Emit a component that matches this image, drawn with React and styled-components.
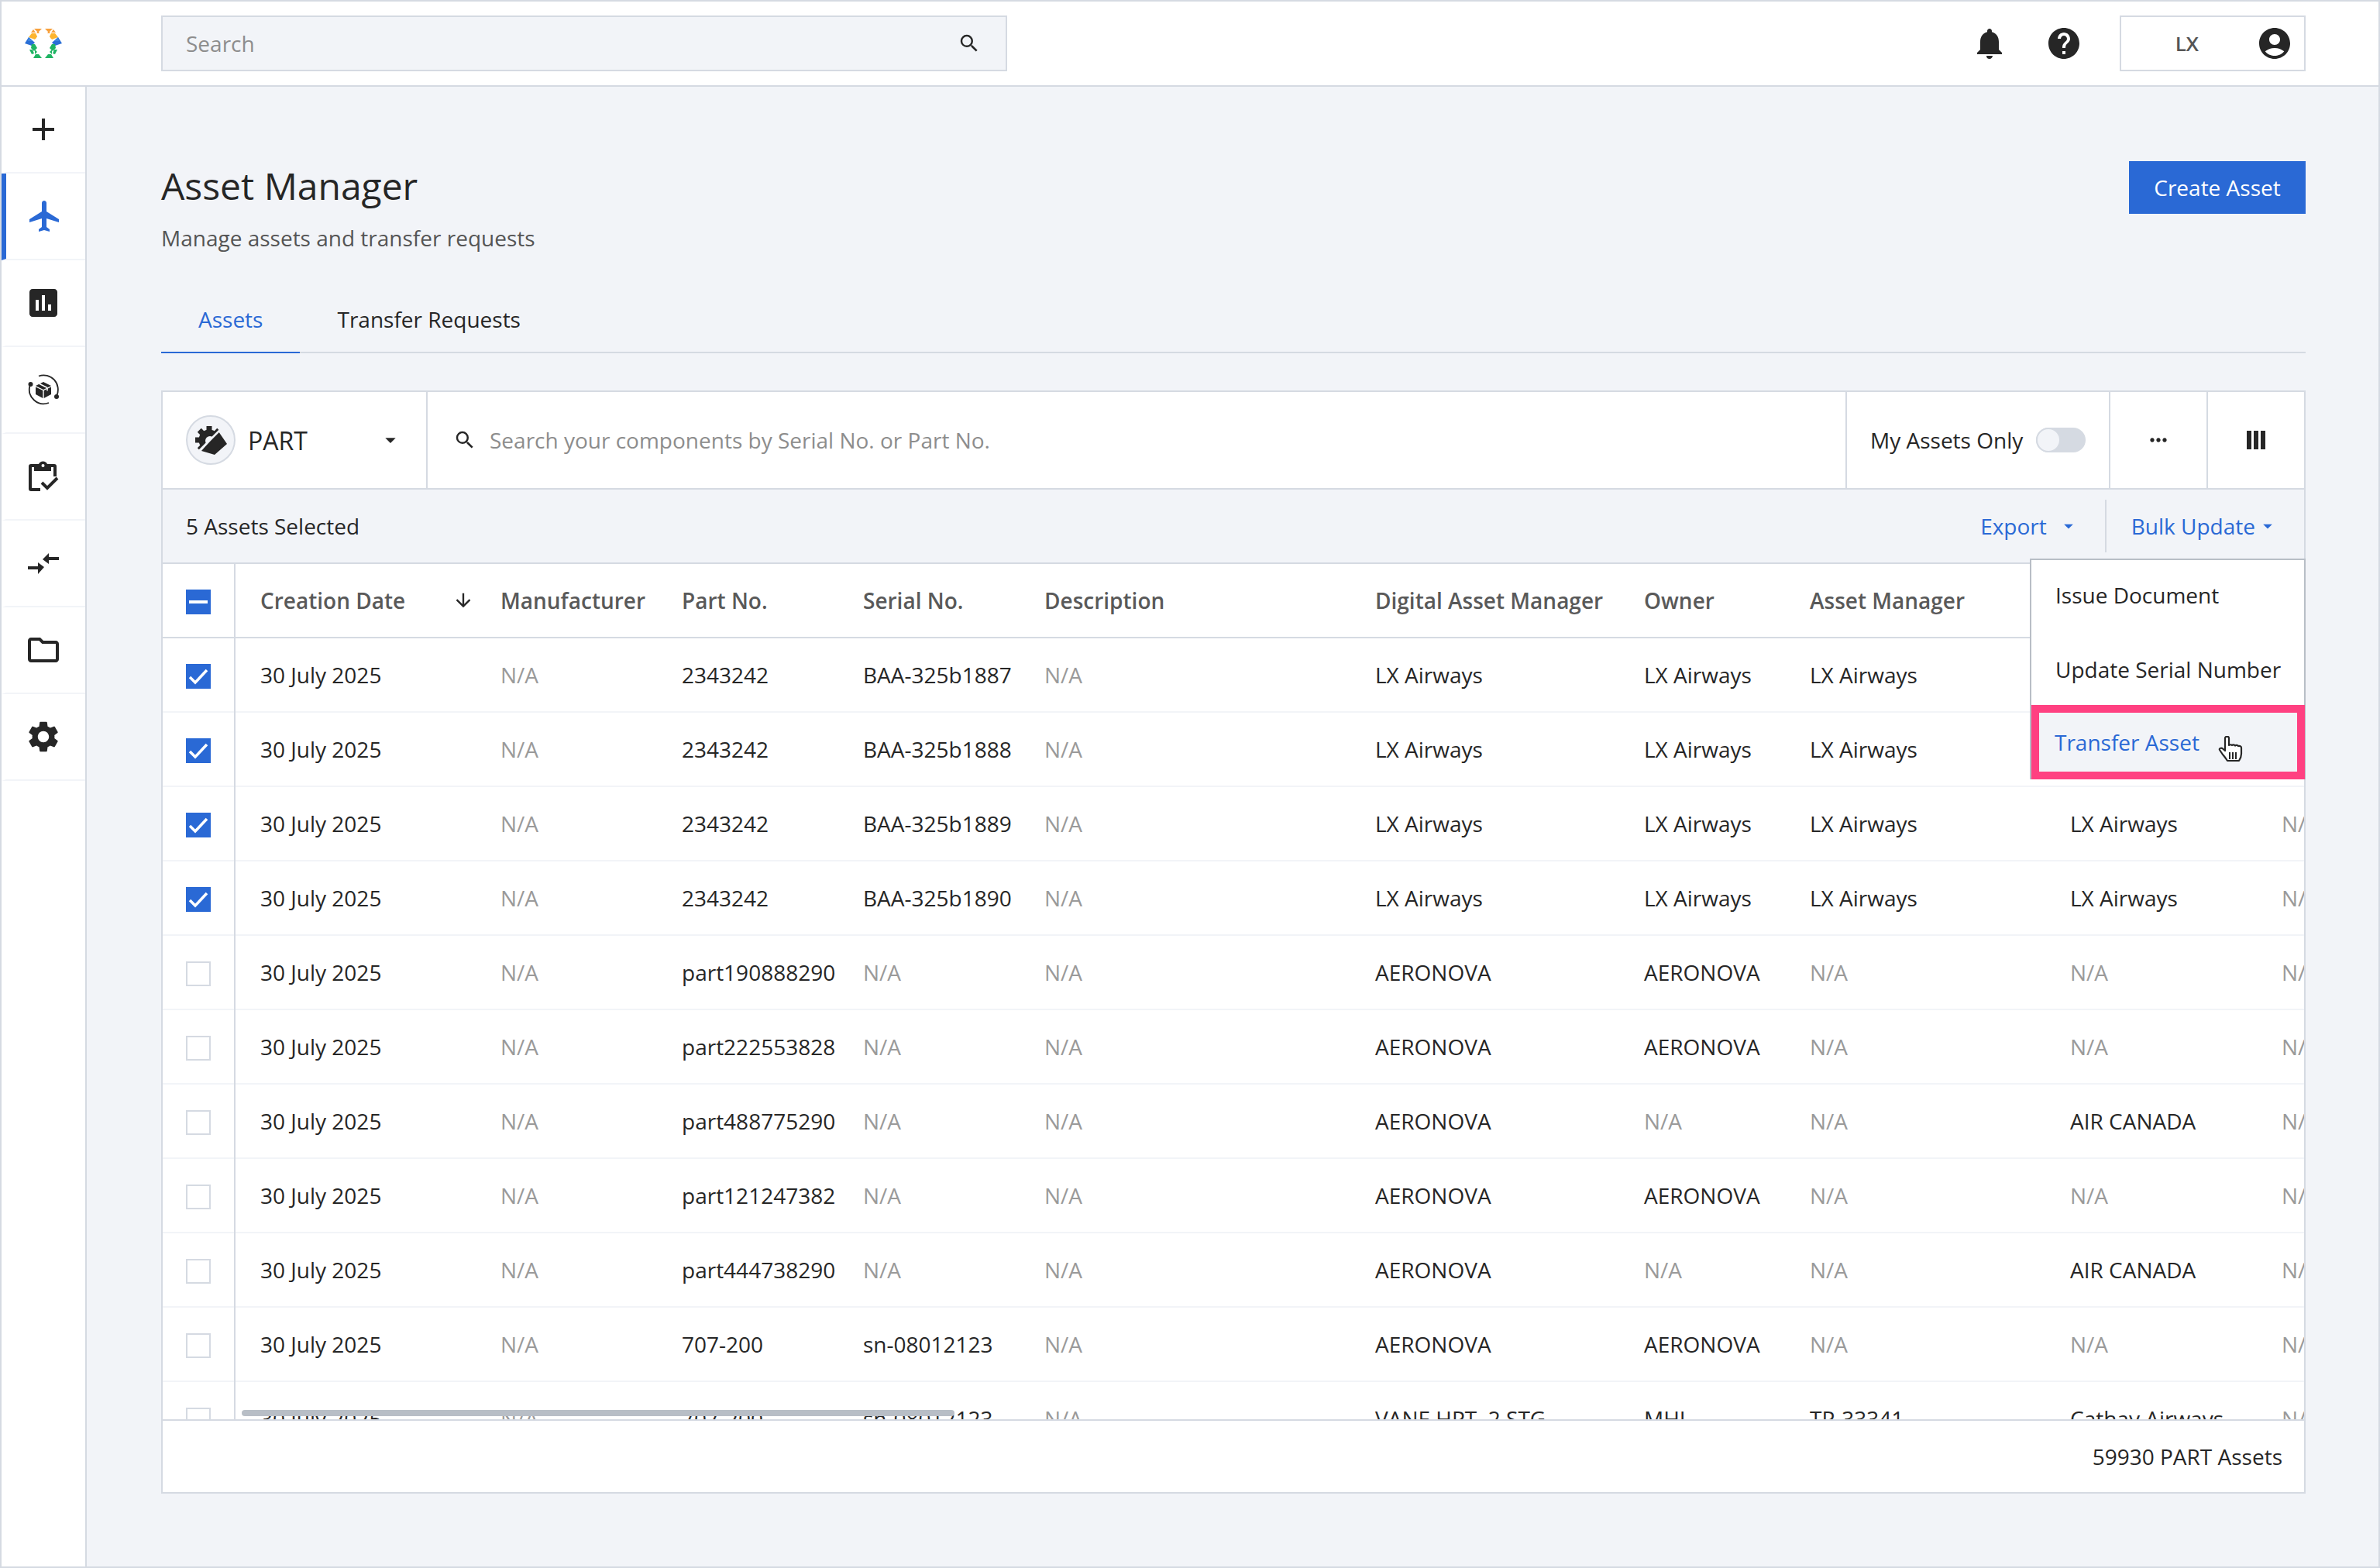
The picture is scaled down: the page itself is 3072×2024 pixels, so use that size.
import React from "react";
import styled, { createGlobalStyle } from "styled-components";
import {
  MdAdd,
  MdFlight,
  MdAssessment,
  MdSettings,
  MdNotifications,
  MdHelp,
  MdAccountCircle,
  MdSearch,
  MdMoreHoriz,
  MdArrowDropDown,
  MdArrowDownward,
  MdOutlineFolder,
} from "react-icons/md";

const BLUE = "#2a69d5";
const LINE = "#d5dae2";
const SOFT = "#f2f4f8";
const INK = "#262626";

const GlobalStyle = createGlobalStyle`
  html, body { margin: 0; padding: 0; background: ${SOFT}; }
  * { box-sizing: border-box; }
  body { font-family: "Open Sans", "Noto Sans", sans-serif; font-size: 28px; color: ${INK}; }
`;

const Page = styled.div`
  width: 3072px;
  height: 2024px;
  display: flex;
  flex-direction: column;
  border: 2px solid ${LINE};
  overflow: hidden;
  background: ${SOFT};
`;

const TopBar = styled.header`
  height: 110px;
  flex: none;
  display: flex;
  align-items: center;
  background: #fff;
  border-bottom: 2px solid ${LINE};
  padding: 0 94px 0 30px;
`;

const LogoBox = styled.div`
  width: 176px;
  flex: none;
  display: flex;
  align-items: center;
`;

const TopSearch = styled.div`
  width: 1092px;
  height: 72px;
  display: flex;
  align-items: center;
  justify-content: space-between;
  padding: 0 32px 0 30px;
  background: ${SOFT};
  border: 2px solid ${LINE};
  color: #8d8d8d;
  svg { color: ${INK}; }
`;

const TopActions = styled.div`
  margin-left: auto;
  display: flex;
  align-items: center;
`;

const RoundIcon = styled.span`
  display: flex;
  color: ${INK};
  margin-right: ${(p) => p.$gap}px;
`;

const UserBox = styled.div`
  width: 240px;
  height: 72px;
  display: flex;
  align-items: center;
  justify-content: flex-end;
  gap: 74px;
  padding-right: 14px;
  border: 2px solid ${LINE};
  font-weight: 600;
  font-size: 26px;
  color: #555;
`;

const Body = styled.div`
  flex: 1;
  display: flex;
  min-height: 0;
`;

const SideNav = styled.nav`
  width: 110px;
  flex: none;
  background: #fff;
  border-right: 2px solid ${LINE};
`;

const NavItem = styled.div`
  height: 112px;
  display: flex;
  align-items: center;
  justify-content: center;
  background: #fff;
  border-bottom: 2px solid ${SOFT};
  border-left: 6px solid ${(p) => (p.$active ? BLUE : "transparent")};
  padding-right: ${(p) => (p.$active ? 2 : 6)}px;
  color: ${(p) => (p.$active ? BLUE : INK)};
`;

const Main = styled.main`
  flex: 1;
  min-width: 0;
  padding: 96px 94px 0 96px;
  display: flex;
  flex-direction: column;
`;

const TitleRow = styled.div`
  display: flex;
  justify-content: space-between;
  align-items: flex-start;
  height: 110px;
`;

const Title = styled.h1`
  margin: 0;
  font-size: 48px;
  font-weight: 400;
  line-height: 64px;
  color: ${INK};
`;

const Subtitle = styled.p`
  margin: 16px 0 0;
  line-height: 38px;
  color: #555;
`;

const CreateButton = styled.button`
  width: 228px;
  height: 68px;
  border: 0;
  background: ${BLUE};
  color: #fff;
  font: inherit;
`;

const Tabs = styled.div`
  display: flex;
  margin-top: 64px;
  height: 74px;
  border-bottom: 2px solid ${LINE};
`;

const Tab = styled.div`
  padding: 0 48px 13px;
  height: 74px;
  display: flex;
  align-items: center;
  color: ${(p) => (p.$active ? BLUE : INK)};
  border-bottom: 2px solid ${(p) => (p.$active ? BLUE : "transparent")};
`;

const Panel = styled.section`
  position: relative;
  margin-top: 48px;
  height: 1424px;
  display: flex;
  flex-direction: column;
  background: #fff;
  border: 2px solid ${LINE};
`;

const Toolbar = styled.div`
  height: 126px;
  flex: none;
  display: flex;
  border-bottom: 2px solid ${LINE};
`;

const TypePicker = styled.div`
  width: 342px;
  flex: none;
  display: flex;
  align-items: center;
  padding: 0 30px 0 30px;
  border-right: 2px solid ${LINE};
  font-size: 32px;
`;

const TypeBadge = styled.span`
  width: 64px;
  height: 64px;
  flex: none;
  display: flex;
  align-items: center;
  justify-content: center;
  margin-right: 16px;
  border-radius: 50%;
  background: ${SOFT};
  border: 2px solid ${LINE};
`;

const Caret = styled(MdArrowDropDown)`
  margin-left: ${(p) => p.$left || "auto"};
  color: ${(p) => p.$tint || INK};
`;

const AssetSearch = styled.div`
  flex: 1;
  display: flex;
  align-items: center;
  gap: 17px;
  padding-left: 33px;
  color: #8d8d8d;
  svg { color: ${INK}; }
`;

const OnlyMine = styled.div`
  width: 340px;
  flex: none;
  display: flex;
  align-items: center;
  padding: 0 30px;
  border-left: 2px solid ${LINE};
`;

const Toggle = styled.span`
  width: 64px;
  height: 32px;
  margin-left: auto;
  border-radius: 16px;
  background: ${LINE};
  display: flex;
`;

const Knob = styled.span`
  width: 32px;
  height: 32px;
  border-radius: 50%;
  background: ${SOFT};
  border: 2px solid ${LINE};
`;

const ToolButton = styled.div`
  width: ${(p) => p.$w}px;
  flex: none;
  display: flex;
  align-items: center;
  justify-content: center;
  border-left: 2px solid ${LINE};
`;

const SelectionBar = styled.div`
  height: 96px;
  flex: none;
  display: flex;
  align-items: center;
  padding: 0 30px;
  background: ${SOFT};
  border-bottom: 2px solid ${LINE};
`;

const BarActions = styled.div`
  margin-left: auto;
  display: flex;
  align-items: center;
  color: ${BLUE};
`;

const BarLink = styled.span`
  display: flex;
  align-items: center;
  height: 68px;
  padding: ${(p) => p.$pad};
  border-left: ${(p) => (p.$split ? `2px solid ${LINE}` : "0")};
`;

const TableWrap = styled.div`
  flex: 1;
  min-height: 0;
  overflow: hidden;
  position: relative;
`;

const Row = styled.div`
  display: grid;
  grid-template-columns: 94px 310px 234px 234px 234px 427px 347px 214px 336px 273px 287px;
  width: 2990px;
  height: 96px;
  border-bottom: 2px solid ${(p) => (p.$head ? LINE : SOFT)};
  color: ${(p) => (p.$head ? "#595959" : INK)};
  font-weight: ${(p) => (p.$head ? 600 : 400)};
`;

const CheckCell = styled.div`
  display: flex;
  align-items: center;
  padding-left: 30px;
  padding-top: 2px;
  border-right: 2px solid ${LINE};
  margin-bottom: -2px;
`;

const Box = styled.span`
  width: 32px;
  height: 32px;
  display: flex;
  align-items: center;
  justify-content: center;
  background: ${(p) => (p.$on ? BLUE : "#fff")};
  border: ${(p) => (p.$on ? "0" : `2px solid ${LINE}`)};
`;

const Cell = styled.div`
  display: flex;
  align-items: center;
  padding-left: 32px;
  white-space: nowrap;
  color: ${(p) => (p.$na ? "#9a9a9a" : "inherit")};
`;

const SortCell = styled(Cell)`
  justify-content: space-between;
  padding-right: 2px;
`;

const ScrollThumb = styled.div`
  position: absolute;
  left: 102px;
  bottom: 4px;
  width: 920px;
  height: 8px;
  border-radius: 4px;
  background: #b8bec6;
`;

const Footer = styled.div`
  height: 94px;
  flex: none;
  display: flex;
  align-items: center;
  justify-content: flex-end;
  padding-right: 28px;
  border-top: 2px solid ${LINE};
`;

const Menu = styled.div`
  position: absolute;
  top: 215px;
  right: -2px;
  width: 356px;
  height: 285px;
  background: #fff;
  border: 2px solid #b8bec6;
  z-index: 2;
  display: flex;
  flex-direction: column;
`;

const MenuItem = styled.div`
  height: 96px;
  flex: none;
  display: flex;
  align-items: center;
  padding: 0 0 6px 31px;
  white-space: nowrap;
`;

const MenuItemHot = styled.div`
  flex: none;
  margin: -5px -1px -2px 0;
  height: 96px;
  display: flex;
  align-items: center;
  gap: 24px;
  padding-left: 20px;
  color: ${BLUE};
  background: ${SOFT};
  border: 10px solid #ff4081;
`;

const Cursor = styled.svg`
  width: 32px;
  height: 36px;
  margin-top: 20px;
`;

const Logo = () => {
  const side = (
    <>
      <polygon fill="#f7a03c" points="8,5 11,1 14,5" />
      <polygon fill="#f7a03c" points="12,0 22,0 17,5" />
      <polygon fill="#f7a03c" points="15,6 19,6 17,3" />
      <polygon fill="#fdb42e" points="9,6 14,6 16,10 13,14 5,11" />
      <polygon fill="#fdb42e" points="12,10 16,10 14,13" />
      <polygon fill="#2a6fd6" points="5,11 13,18 9,22 0,19" />
      <polygon fill="#3f86e0" points="5,11 10,16 4,16" />
      <polygon fill="#1fb463" points="9,20 13,20 16,25 12,29 8,25" />
      <polygon fill="#1fb463" points="6,27 10,27 12,32 9,33" />
      <polygon fill="#1fb463" points="13,27 16,30 13,33" />
      <polygon fill="#1fb463" points="11,38 22,38 18,33 14,33" />
    </>
  );
  return (
    <svg width="48" height="38" viewBox="0 0 48 38">
      <g>{side}</g>
      <g transform="translate(48 0) scale(-1 1)">{side}</g>
    </svg>
  );
};

const ClipboardIcon = () => (
  <svg width="40" height="40" viewBox="0 0 40 40" fill="none">
    <path
      fill="#262626"
      d="M4 4h10a6 6 0 0 1 11 0h9a3 3 0 0 1 3 3v13h-4V8h-3v5H8V8H5v27h11v4H4a3 3 0 0 1-3-3V7a3 3 0 0 1 3-3z"
    />
    <circle cx="19.500" cy="6" r="2" fill="#fff" />
    <path d="M18 28l7 7 13-13" stroke="#262626" strokeWidth="4" />
  </svg>
);

const TransferIcon = () => (
  <svg width="40" height="27" viewBox="0 0 40 27" fill="#262626">
    <path d="M0 17h13v-5l8 6-8 9v-6H0z" />
    <path d="M40 9H27v5l-8-6 8-8v5h13z" />
  </svg>
);

const OrbitIcon = () => (
  <svg width="40" height="40" viewBox="0 0 40 40" fill="none">
    <path d="M14 2.500A18.500 18.500 0 0 1 37 28" stroke="#262626" strokeWidth="1.800" />
    <path d="M2.500 15A18.500 18.500 0 0 0 27 37" stroke="#262626" strokeWidth="1.800" />
    <circle cx="3.500" cy="13" r="3" fill="#262626" />
    <circle cx="37" cy="29" r="3" fill="#262626" />
    <path fill="#262626" d="M20 10l10 5-10 5-10-5zM10 16.500l9.300 4.500v10L10 26zM20.700 21l9.300-4.500V26l-9.300 5z" />
    <path d="M15 12.500l10 5" stroke="#fff" strokeWidth="1.500" />
    <path d="M25 17.500v4" stroke="#fff" strokeWidth="1.500" />
  </svg>
);

const PartIcon = () => (
  <svg width="41" height="37" viewBox="0 0 41 37" fill="#262626">
    <clipPath id="gear-half">
      <polygon points="0,0 33,0 33,4 6,30 0,36" />
    </clipPath>
    <g clipPath="url(#gear-half)">
      <circle cx="18" cy="18" r="13.500" />
      {[0, 45, 90, 135, 180, 225, 270, 315].map((a) => (
        <rect key={a} x="14.500" y="0" width="7" height="8" transform={`rotate(${a} 18 18)`} />
      ))}
    </g>
    <circle cx="19" cy="19" r="6" fill="#f2f4f8" />
    <polygon points="30,7 41,23 25,37 8,32" />
    <path d="M33 4L5 32" stroke="#f2f4f8" strokeWidth="2.500" />
  </svg>
);

const ColumnsIcon = () => (
  <svg width="24" height="24" viewBox="0 0 24 24" fill="#262626">
    <rect x="0" y="0" width="6" height="24" />
    <rect x="9" y="0" width="6" height="24" />
    <rect x="18" y="0" width="6" height="24" />
  </svg>
);

const Tick = () => (
  <svg width="32" height="32" viewBox="0 0 32 32" fill="none">
    <path d="M5 17l7 7L27 8" stroke="#fff" strokeWidth="3.500" />
  </svg>
);

const Dash = () => (
  <svg width="32" height="32" viewBox="0 0 32 32">
    <rect x="4" y="14" width="24" height="4" fill="#fff" />
  </svg>
);

const HandCursor = () => (
  <Cursor viewBox="0 0 32 36">
    <path
      d="M9 3c0-3 5-3 5 0v9c1-1 3-1 4 0 1-1 3-1 4 .5 1-1 3-1 4 .5 1-.5 4 0 4 2v8c0 3-1 6-3 9H12c-2-3-4-6-6-8l-4-6c-1-2 2-3 3.500-2l3.500 3z"
      fill="#fff"
      stroke="#262626"
      strokeWidth="2.200"
      strokeLinejoin="round"
    />
    <path d="M15 21v9M19 21v9M23 21v9" stroke="#262626" strokeWidth="2" />
  </Cursor>
);

const NA = "N/A";
const LX = "LX Airways";
const AERO = "AERONOVA";

const rows = [
  { on: true, part: "2343242", serial: "BAA-325b1887", dam: LX, owner: LX, am: LX, covered: true },
  { on: true, part: "2343242", serial: "BAA-325b1888", dam: LX, owner: LX, am: LX, covered: true },
  { on: true, part: "2343242", serial: "BAA-325b1889", dam: LX, owner: LX, am: LX, op: LX },
  { on: true, part: "2343242", serial: "BAA-325b1890", dam: LX, owner: LX, am: LX, op: LX },
  { part: "part190888290", serial: NA, dam: AERO, owner: AERO, am: NA, op: NA },
  { part: "part222553828", serial: NA, dam: AERO, owner: AERO, am: NA, op: NA },
  { part: "part488775290", serial: NA, dam: AERO, owner: NA, am: NA, op: "AIR CANADA" },
  { part: "part121247382", serial: NA, dam: AERO, owner: AERO, am: NA, op: NA },
  { part: "part444738290", serial: NA, dam: AERO, owner: NA, am: NA, op: "AIR CANADA" },
  { part: "707-200", serial: "sn-08012123", dam: AERO, owner: AERO, am: NA, op: NA },
  { part: "707-200", serial: "sn-08012123", dam: "VANE HPT, 2 STG", owner: "MHI", am: "TP-33341", op: "Cathay Airways" },
];

const navIcons = [
  <MdAdd size={48} />,
  <MdFlight size={48} />,
  <MdAssessment size={48} />,
  <OrbitIcon />,
  <ClipboardIcon />,
  <TransferIcon />,
  <MdOutlineFolder size={48} />,
  <MdSettings size={48} />,
];

const Text = ({ value }) => <Cell $na={value === NA}>{value}</Cell>;

export default function App() {
  return (
    <>
      <GlobalStyle />
      <Page>
        <TopBar>
          <LogoBox>
            <Logo />
          </LogoBox>
          <TopSearch>
            Search
            <MdSearch size={30} />
          </TopSearch>
          <TopActions>
            <RoundIcon $gap={48}>
              <MdNotifications size={48} />
            </RoundIcon>
            <RoundIcon $gap={48}>
              <MdHelp size={48} />
            </RoundIcon>
            <UserBox>
              LX
              <MdAccountCircle size={48} color={INK} />
            </UserBox>
          </TopActions>
        </TopBar>
        <Body>
          <SideNav>
            {navIcons.map((icon, i) => (
              <NavItem key={i} $active={i === 1}>
                {icon}
              </NavItem>
            ))}
          </SideNav>
          <Main>
            <TitleRow>
              <div>
                <Title>Asset Manager</Title>
                <Subtitle>Manage assets and transfer requests</Subtitle>
              </div>
              <CreateButton>Create Asset</CreateButton>
            </TitleRow>
            <Tabs>
              <Tab $active>Assets</Tab>
              <Tab>Transfer Requests</Tab>
            </Tabs>
            <Panel>
              <Toolbar>
                <TypePicker>
                  <TypeBadge>
                    <PartIcon />
                  </TypeBadge>
                  PART
                  <Caret size={32} />
                </TypePicker>
                <AssetSearch>
                  <MdSearch size={30} />
                  Search your components by Serial No. or Part No.
                </AssetSearch>
                <OnlyMine>
                  My Assets Only
                  <Toggle>
                    <Knob />
                  </Toggle>
                </OnlyMine>
                <ToolButton $w={126}>
                  <MdMoreHoriz size={32} />
                </ToolButton>
                <ToolButton $w={126}>
                  <ColumnsIcon />
                </ToolButton>
              </Toolbar>
              <SelectionBar>
                5 Assets Selected
                <BarActions>
                  <BarLink $pad="0 33px 0 0">
                    Export
                    <Caret size={28} $left="14px" $tint={BLUE} />
                  </BarLink>
                  <BarLink $split $pad="0 3px 0 32px">
                    Bulk Update
                    <Caret size={28} $left="2px" $tint={BLUE} />
                  </BarLink>
                </BarActions>
              </SelectionBar>
              <TableWrap>
                <Row $head>
                  <CheckCell>
                    <Box $on>
                      <Dash />
                    </Box>
                  </CheckCell>
                  <SortCell>
                    Creation Date
                    <MdArrowDownward size={28} color={INK} />
                  </SortCell>
                  <Cell>Manufacturer</Cell>
                  <Cell>Part No.</Cell>
                  <Cell>Serial No.</Cell>
                  <Cell>Description</Cell>
                  <Cell>Digital Asset Manager</Cell>
                  <Cell>Owner</Cell>
                  <Cell>Asset Manager</Cell>
                </Row>
                {rows.map((row, i) => (
                  <Row key={i}>
                    <CheckCell>
                      <Box $on={row.on}>{row.on && <Tick />}</Box>
                    </CheckCell>
                    <Cell>30 July 2025</Cell>
                    <Text value={NA} />
                    <Text value={row.part} />
                    <Text value={row.serial} />
                    <Text value={NA} />
                    <Text value={row.dam} />
                    <Text value={row.owner} />
                    <Text value={row.am} />
                    {!row.covered && <Text value={row.op} />}
                    {!row.covered && <Text value={NA} />}
                  </Row>
                ))}
                <ScrollThumb />
              </TableWrap>
              <Footer>59930 PART Assets</Footer>
              <Menu>
                <MenuItem>Issue Document</MenuItem>
                <MenuItem>Update Serial Number</MenuItem>
                <MenuItemHot>
                  Transfer Asset
                  <HandCursor />
                </MenuItemHot>
              </Menu>
            </Panel>
          </Main>
        </Body>
      </Page>
    </>
  );
}
